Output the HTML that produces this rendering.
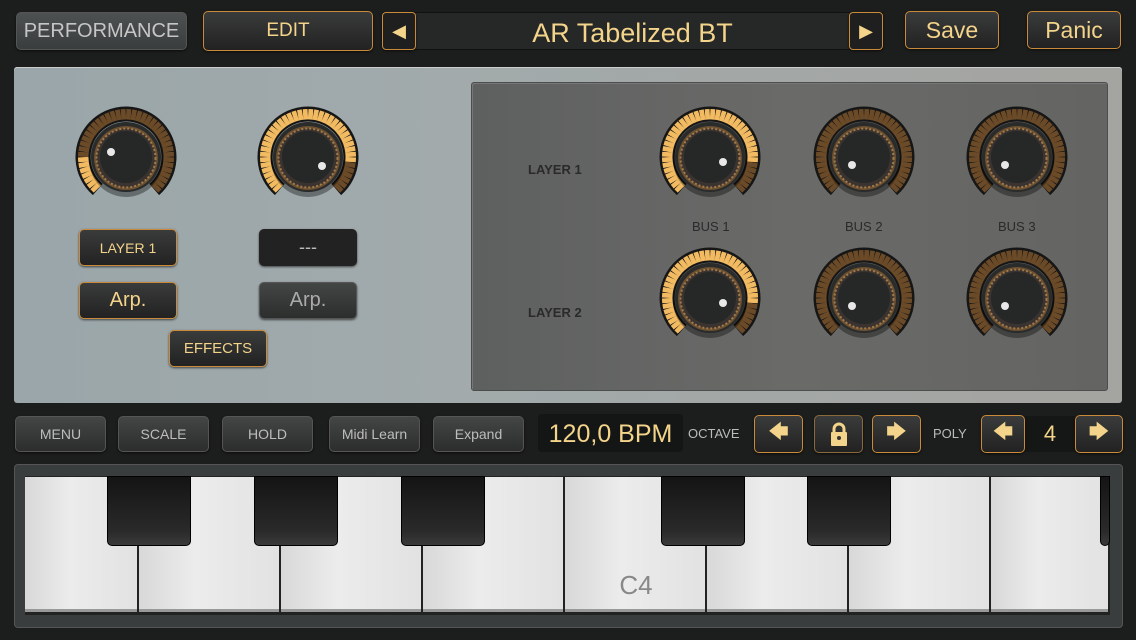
<!DOCTYPE html>
<html><head><meta charset="utf-8"><style>
*{box-sizing:border-box;margin:0;padding:0}
body{width:1136px;height:640px;background:#1c1d1d;font-family:"Liberation Sans",sans-serif;position:relative;overflow:hidden}
.a{position:absolute}
.btn{position:absolute;border-radius:5px;background:linear-gradient(#3a3b3b,#222);display:flex;align-items:center;justify-content:center;color:#f3d48a;border:1px solid #c98a3a;box-shadow:0 1px 2px rgba(0,0,0,.6)}
.gb{border:1px solid #555;color:#bdbdbd;background:linear-gradient(#444646,#2c2d2d)}
.tb{font-size:14px}
</style></head><body>
<div class="btn gb" style="left:16px;top:12px;width:171px;height:38px;font-size:20px;color:#c6c6c6;background:linear-gradient(#4d5152,#3a3d3e)">PERFORMANCE</div>
<div class="btn" style="left:203px;top:11px;width:170px;height:40px;font-size:19px">EDIT</div>
<div class="a" style="left:383px;top:12px;width:500px;height:38px;background:#262727;border:1px solid #111"></div>
<div class="btn" style="left:382px;top:12px;width:34px;height:38px;border-radius:4px;font-size:18px;background:#1f1f1f">◀</div>
<div class="btn" style="left:849px;top:12px;width:34px;height:38px;border-radius:4px;font-size:18px;background:#1f1f1f">▶</div>
<div class="a" style="left:416px;top:14px;width:433px;height:36px;color:#f3d48a;font-size:27px;text-align:center;line-height:38px">AR Tabelized BT</div>
<div class="btn" style="left:905px;top:11px;width:94px;height:38px;font-size:23px">Save</div>
<div class="btn" style="left:1027px;top:11px;width:94px;height:38px;font-size:23px">Panic</div>

<div class="a" style="left:14px;top:67px;width:1108px;height:336px;border-radius:3px;background:linear-gradient(90deg,#9aa6aa 0%,#a2aaab 40%,#a4a4a0 100%);box-shadow:inset 0 1px 0 #ccc"></div>
<div class="a" style="left:471px;top:82px;width:637px;height:309px;border-radius:3px;background:linear-gradient(90deg,#5e6060,#6a6a68 50%,#646462);border:1px solid #4c4d4d;box-shadow:inset 1px 1px 0 #777"></div>
<div class="a" style="left:528px;top:162px;font-size:13px;font-weight:bold;color:#2a2a2a">LAYER 1</div>
<div class="a" style="left:528px;top:305px;font-size:13px;font-weight:bold;color:#2a2a2a">LAYER 2</div>
<div class="a" style="left:692px;top:219px;font-size:13px;color:#2a2a2a">BUS 1</div>
<div class="a" style="left:845px;top:219px;font-size:13px;color:#2a2a2a">BUS 2</div>
<div class="a" style="left:998px;top:219px;font-size:13px;color:#2a2a2a">BUS 3</div>

<div class="btn tb" style="left:79px;top:229px;width:98px;height:37px">LAYER 1</div>
<div class="btn" style="left:259px;top:229px;width:98px;height:37px;border-color:#222;color:#bbb;background:#222;font-size:18px">---</div>
<div class="btn" style="left:79px;top:282px;width:98px;height:37px;font-size:20px">Arp.</div>
<div class="btn gb" style="left:259px;top:282px;width:98px;height:37px;font-size:20px;color:#aaa">Arp.</div>
<div class="btn tb" style="left:169px;top:330px;width:98px;height:37px;font-size:15px">EFFECTS</div>

<svg class="a" style="left:0;top:0" width="1136" height="640" id="k"></svg>

<div class="btn gb tb" style="left:15px;top:416px;width:91px;height:36px">MENU</div>
<div class="btn gb tb" style="left:118px;top:416px;width:91px;height:36px">SCALE</div>
<div class="btn gb tb" style="left:222px;top:416px;width:91px;height:36px">HOLD</div>
<div class="btn gb tb" style="left:329px;top:416px;width:91px;height:36px">Midi Learn</div>
<div class="btn gb tb" style="left:433px;top:416px;width:91px;height:36px">Expand</div>
<div class="a" style="left:538px;top:414px;width:145px;height:38px;background:#141515;border-radius:4px;color:#f3d48a;font-size:25px;text-align:center;line-height:40px">120,0 BPM</div>
<div class="a" style="left:688px;top:426px;font-size:13px;color:#bbb">OCTAVE</div>
<div class="btn" style="left:754px;top:415px;width:49px;height:38px;font-size:20px">&#129092;</div>
<div class="btn" style="left:814px;top:415px;width:49px;height:38px;border-color:#8a6a3a"><svg width="20" height="26"><path d="M5 12V8a5 5 0 0 1 10 0v4" stroke="#f3d48a" stroke-width="3" fill="none"/><rect x="2" y="11" width="16" height="14" rx="1" fill="#f3d48a"/><circle cx="10" cy="17" r="2" fill="#333"/></svg></div>
<div class="btn" style="left:872px;top:415px;width:49px;height:38px;font-size:20px">&#129094;</div>
<div class="a" style="left:933px;top:426px;font-size:13px;color:#bbb">POLY</div>
<div class="a" style="left:1025px;top:416px;width:50px;height:36px;background:#151616;color:#f3d48a;font-size:22px;text-align:center;line-height:36px">4</div>
<div class="btn" style="left:981px;top:415px;width:44px;height:38px;font-size:20px">&#129092;</div>
<div class="btn" style="left:1075px;top:415px;width:48px;height:38px;font-size:20px">&#129094;</div>

<div class="a" style="left:14px;top:464px;width:1109px;height:164px;border-radius:4px;background:#3a3d3d;border:1px solid #555"></div>
<div class="a" style="left:25px;top:476px;width:1085px;height:139px;background:#222"></div>
<div id="kb"></div>
<div class="a" style="left:565px;top:570px;width:142px;text-align:center;font-size:26px;color:#888">C4</div>
<script>
var s='',K=[[126,157,7,-15,-5],[308,157,34,14,9],[710,157,34,13,5],[864,157,0,-12,8],[1017,157,0,-12,8],[710,298,34,13,5],[864,298,0,-12,8],[1017,298,0,-12,8]];
function P(x,y,r,a){a=a*Math.PI/180;return (x+Math.cos(a)*r)+' '+(y-Math.sin(a)*r);}
K.forEach(function(k){var x=k[0],y=k[1];
s+='<path d="M'+P(x,y,43,229)+' A43 43 0 1 1 '+P(x,y,43,-49)+'" stroke="#161616" stroke-width="15" fill="none"/>';
for(var i=0;i<40;i++){var a=225-i*270/39;
s+='<line x1="'+P(x,y,37.5,a).replace(' ','" y1="')+'" x2="'+P(x,y,48,a).replace(' ','" y2="')+'" stroke="'+(i<k[2]?'#f2bb62':'#6b4a28')+'" stroke-width="4.8"/>';}
s+='<circle cx="'+x+'" cy="'+(y+3)+'" r="37" fill="rgba(0,0,0,.35)"/><circle cx="'+x+'" cy="'+y+'" r="35" fill="#2a2b2b"/><circle cx="'+x+'" cy="'+(y+1)+'" r="32" fill="#6a4f30"/><circle cx="'+x+'" cy="'+(y+1)+'" r="29.5" fill="#3a3330" stroke="#a07a4a" stroke-width="2" stroke-dasharray="2 2"/><circle cx="'+x+'" cy="'+y+'" r="26" fill="#262727"/><circle cx="'+(x+k[3])+'" cy="'+(y+k[4])+'" r="4" fill="#e8e8e8"/>';});
document.getElementById('k').innerHTML=s;
var h='',w=[25,139,281,423,565,707,849,991,1110];
for(var i=0;i<8;i++)h+='<div class="a" style="left:'+w[i]+'px;top:477px;width:'+(w[i+1]-w[i]-2)+'px;height:135px;background:linear-gradient(90deg,#d8d8d8,#ececec 40%,#e2e2e2);border-bottom:3px solid #999"></div>';
[107,254,401,661,807,1100].forEach(function(x){h+='<div class="a" style="left:'+x+'px;top:476px;width:'+(x==1100?10:84)+'px;height:70px;border-radius:0 0 5px 5px;background:linear-gradient(#141414,#2a2a2a 80%,#3a3a3a);border:1px solid #000"></div>';});
document.getElementById('kb').innerHTML=h;
</script>
</body></html>
